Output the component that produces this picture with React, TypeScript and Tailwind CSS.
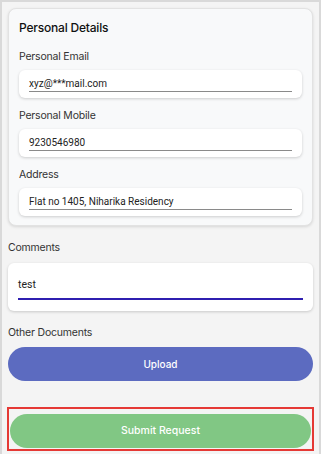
import React from 'react';

function Field({ label, value }: { label: string; value: string }) {
  return (
    <div className="mt-[11px] first-of-type:mt-[14px]">
      <p className="text-[10.5px] leading-[14px] tracking-[-0.2px] text-[#333]">{label}</p>
      <div className="mt-[6px] h-[28px] rounded-[6px] bg-white px-[10px] pt-[7px] shadow-[0_1px_3px_rgba(0,0,0,0.18)]">
        <div className="border-b border-[#8a8a8a] pb-[1px] font-['Roboto',sans-serif] text-[10px] leading-[13px] text-[#222]">
          {value}
        </div>
      </div>
    </div>
  );
}

export default function App() {
  return (
    <div className="h-[454px] w-[321px] overflow-hidden border-x-2 border-t-2 border-[#d9d9d9] bg-[#f4f4f4] font-['Inter',sans-serif]">
      <div className="px-[6px] pt-[6px]">
        {/* Personal details card */}
        <div className="h-[218px] overflow-hidden rounded-[8px] border border-[#e2e2e2] bg-[#f8f9fa] px-[10px] pt-[11px] shadow-[0_1px_3px_rgba(0,0,0,0.12)]">
          <h2 className="text-[12px] font-medium leading-[16px] tracking-[-0.2px] text-[#111]">Personal Details</h2>
          <Field label="Personal Email" value="xyz@***mail.com" />
          <Field label="Personal Mobile" value="9230546980" />
          <Field label="Address" value="Flat no 1405, Niharika Residency" />
        </div>

        {/* Comments */}
        <p className="mt-[15px] text-[10.5px] leading-[14px] tracking-[-0.2px] text-[#333]">Comments</p>
        <div className="mt-[8px] h-[48px] rounded-[6px] bg-white px-[10px] pt-[15px] shadow-[0_1px_3px_rgba(0,0,0,0.18)]">
          <div className="border-b-2 border-[#2f1fb0] pb-[7px] font-['Roboto',sans-serif] text-[10.5px] leading-[13px] text-[#222]">
            test
          </div>
        </div>

        {/* Other documents */}
        <p className="mt-[15px] text-[10.5px] leading-[14px] tracking-[-0.2px] text-[#333]">Other Documents</p>
        <button className="mt-[7px] h-[34px] w-full rounded-full bg-[#5c6bc0] text-[10px] font-medium text-white">
          Upload
        </button>

        <div className="mt-[26px] -mx-[1px] border-2 border-[#e53935] px-[1px] pb-[1px] pt-[5px]">
          <button className="h-[34px] w-full rounded-full bg-[#81c784] text-[10.5px] font-medium text-white">
            Submit Request
          </button>
        </div>
      </div>
    </div>
  );
}
